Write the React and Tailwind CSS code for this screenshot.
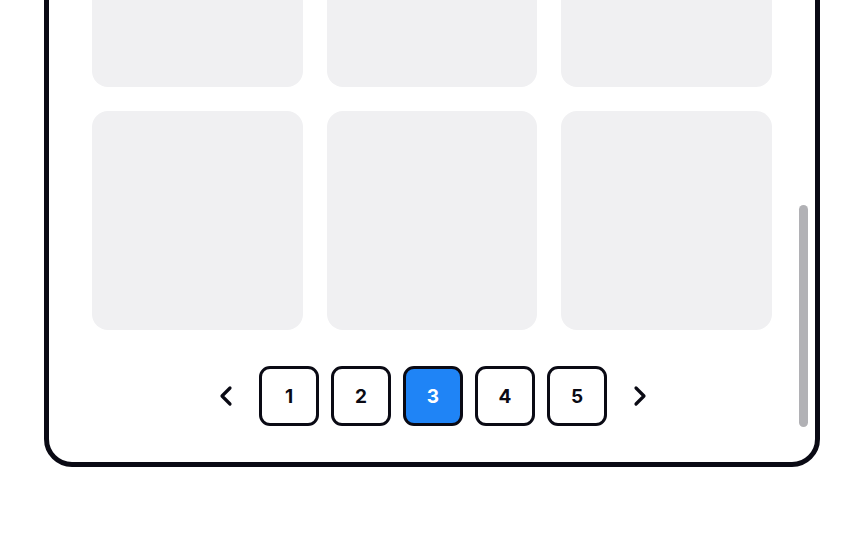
import { ChevronLeft, ChevronRight } from "lucide-react";

const cards = [1, 2, 3, 4, 5, 6];
const pages = [1, 2, 3, 4, 5];

export default function App() {
  const current = 3;

  return (
    <div className="h-[540px] w-[864px] overflow-hidden bg-white font-['Inter','Liberation_Sans',sans-serif]">
      <div className="relative -mt-[181px] ml-[44px] w-[776px] rounded-[28px] border-[5px] border-[#0a0a14] bg-white px-[43px] pt-[44px] pb-[36px]">
        {/* grid */}
        <div className="grid grid-cols-3 gap-[24px]">
          {cards.map((c) => (
            <div key={c} className="h-[219px] rounded-[16px] bg-[#f0f0f2]" />
          ))}
        </div>

        {/* paginación */}
        <div className="mt-[36px] flex items-center justify-center pl-[2px]">
          <button className="mr-[17px] flex h-[32px] w-[32px] items-center justify-center text-[#0a0a14]">
            <ChevronLeft size={32} strokeWidth={2.4} />
          </button>
          <div className="flex gap-[12px]">
            {pages.map((p) => (
              <button
                key={p}
                className={
                  p === current
                    ? "flex h-[60px] w-[60px] items-center justify-center rounded-[11px] border-[3px] border-[#0a0a14] bg-[#1f84f6] pt-[2px] text-[19px] font-bold text-white"
                    : "flex h-[60px] w-[60px] items-center justify-center rounded-[11px] border-[3px] border-[#0a0a14] bg-white pt-[2px] text-[19px] font-bold text-[#0a0a14]"
                }
              >
                {p}
              </button>
            ))}
          </div>
          <button className="ml-[17px] flex h-[32px] w-[32px] items-center justify-center text-[#0a0a14]">
            <ChevronRight size={32} strokeWidth={2.4} />
          </button>
        </div>

        {/* scrollbar */}
        <div className="absolute right-[7px] bottom-[35px] h-[222px] w-[9px] rounded-full bg-[#b1b1b5]" />
      </div>
    </div>
  );
}
